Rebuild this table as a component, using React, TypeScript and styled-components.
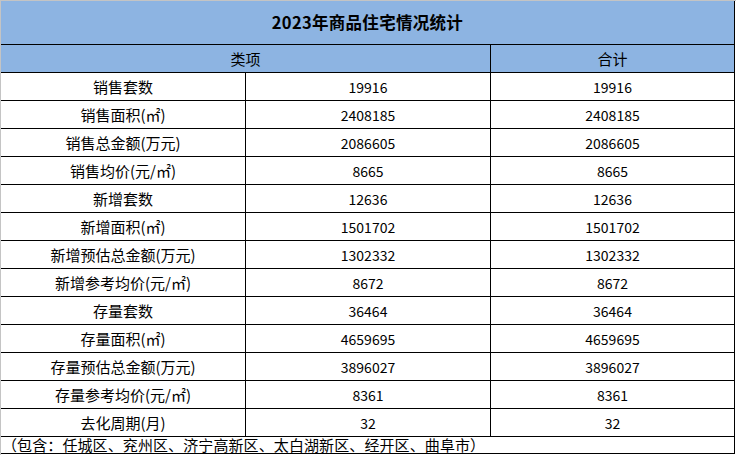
import React from "react";
import styled, { createGlobalStyle } from "styled-components";

const GlobalStyle = createGlobalStyle`
  html, body { margin: 0; padding: 0; background: #ffffff; }
  body { font-family: "Noto Sans CJK SC", "Noto Sans", sans-serif; color: #000; }
  * { box-sizing: border-box; }
`;

const Frame = styled.div`
  width: 736px;
  height: 455px;
  border-top: 1px solid #c4c4c4;
  border-left: 1px solid #c4c4c4;
  background: #ffffff;
`;

const Sheet = styled.div`
  width: 734px;
  display: grid;
  grid-template-columns: 245px 245px 244px;
`;

const Cell = styled.div<{ $span?: number; $h: number; $blue?: boolean; $align?: "left" | "center" }>`
  grid-column: span ${(p) => p.$span ?? 1};
  height: ${(p) => p.$h}px;
  border-right: 1px solid #000;
  border-bottom: 1px solid #000;
  background: ${(p) => (p.$blue ? "#8db4e2" : "#ffffff")};
  display: flex;
  align-items: center;
  justify-content: ${(p) => (p.$align === "left" ? "flex-start" : "center")};
  padding: ${(p) => (p.$align === "left" ? "0 0 0 1px" : "0")};
  font-size: 15px;
  line-height: 1;
  white-space: nowrap;
`;

const Title = styled(Cell)`
  font-size: 16.5px;
  font-weight: 700;
  letter-spacing: 0.3px;
`;

const Num = styled.span`
  font-family: "Noto Sans CJK SC", sans-serif;
  font-size: 14px;
  letter-spacing: 0px;
`;

const Note = styled(Cell)`
  font-size: 15px;
  line-height: 16px;
  letter-spacing: 0.1px;
`;

type Row = [string, string];

const rows: Row[] = [
  ["销售套数", "19916"],
  ["销售面积(㎡)", "2408185"],
  ["销售总金额(万元)", "2086605"],
  ["销售均价(元/㎡)", "8665"],
  ["新增套数", "12636"],
  ["新增面积(㎡)", "1501702"],
  ["新增预估总金额(万元)", "1302332"],
  ["新增参考均价(元/㎡)", "8672"],
  ["存量套数", "36464"],
  ["存量面积(㎡)", "4659695"],
  ["存量预估总金额(万元)", "3896027"],
  ["存量参考均价(元/㎡)", "8361"],
  ["去化周期(月)", "32"],
];

export default function App() {
  return (
    <>
      <GlobalStyle />
      <Frame>
        <Sheet>
          <Title $span={3} $h={44} $blue>
            2023年商品住宅情况统计
          </Title>
          <Cell $span={2} $h={28} $blue>
            类项
          </Cell>
          <Cell $h={28} $blue>
            合计
          </Cell>
          {rows.map(([label, value]) => (
            <React.Fragment key={label}>
              <Cell $h={28}>{label}</Cell>
              <Cell $h={28}>
                <Num>{value}</Num>
              </Cell>
              <Cell $h={28}>
                <Num>{value}</Num>
              </Cell>
            </React.Fragment>
          ))}
          <Note $span={3} $h={17} $align="left">
            （包含：任城区、兖州区、济宁高新区、太白湖新区、经开区、曲阜市）
          </Note>
        </Sheet>
      </Frame>
    </>
  );
}
